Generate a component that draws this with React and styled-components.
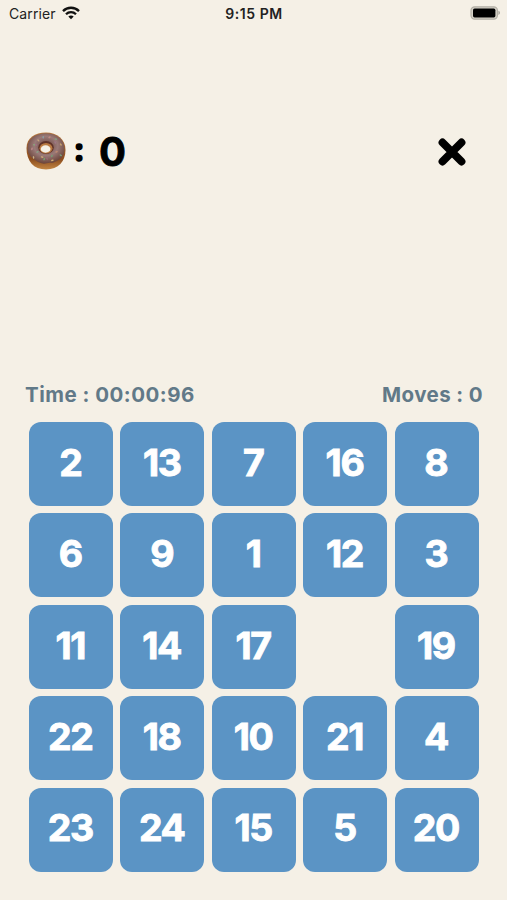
import React, { useState } from 'react'
import styled, { createGlobalStyle } from 'styled-components'

const colors = {
  cream: '#f5f0e6',
  blue: '#5b94c5',
  slate: '#617988',
  black: '#000'
}

const GlobalStyle = createGlobalStyle`
  * {
    box-sizing: border-box;
  }

  body {
    margin: 0;
    background: ${colors.cream};
    font-family: Inter, 'Liberation Sans', sans-serif;
  }
`

const Screen = styled.div`
  width: 507px;
  height: 900px;
  display: flex;
  flex-direction: column;
  overflow: hidden;
  background: ${colors.cream};
`

const StatusBar = styled.div`
  height: 26px;
  padding: 0 6px 0 9px;
  display: grid;
  grid-template-columns: 1fr auto 1fr;
  align-items: center;
  color: #222;
  font-size: 14px;
`

const Carrier = styled.div`
  display: flex;
  align-items: center;
  gap: 6px;
  letter-spacing: 0.1px;
`

const Clock = styled.div`
  padding-right: 2px;
  font-weight: 600;
  font-size: 14px;
  letter-spacing: 0.55px;
`

const BatteryIcon = styled.svg`
  justify-self: end;
`

const Header = styled.header`
  height: 60px;
  margin-top: 96px;
  padding: 0 41px 0 26px;
  display: flex;
  align-items: center;
  justify-content: space-between;
`

const Score = styled.div`
  display: flex;
  align-items: center;
  color: ${colors.black};
  font-size: 40px;
  line-height: 60px;
  font-weight: 700;
  -webkit-text-stroke: 0.8px #000;
`

const DonutIcon = styled.svg`
  margin-bottom: 3px;
`

const Colon = styled.span`
  width: 14px;
  margin: 0 13px 0 6px;
  padding-bottom: 5px;
  text-align: center;
  font-size: 32px;
  -webkit-text-stroke: 1.6px #000;
`

const CloseButton = styled.button`
  width: 28px;
  height: 28px;
  padding: 0;
  border: 0;
  background: none;
  display: flex;
`

const Stats = styled.div`
  height: 30px;
  margin-top: 197px;
  padding: 0 24px 0 25px;
  display: flex;
  align-items: center;
  justify-content: space-between;
  color: ${colors.slate};
  font-size: 20.5px;
  font-weight: 700;
`

const Stat = styled.span`
  white-space: pre;
  letter-spacing: ${props => props.$spacing}px;
`

const Board = styled.main`
  margin: 13px 28px 0 29px;
  display: grid;
  grid-template-columns: repeat(5, 84px);
  grid-auto-rows: 84px;
  gap: 7.4px;
`

const Tile = styled.button`
  padding: 0 0 3px;
  border: 0;
  border-radius: 12px;
  background: ${colors.blue};
  color: #fff;
  font: 700 37.5px/1 Inter, 'Liberation Sans', sans-serif;
  letter-spacing: ${props => props.$spacing}px;
  text-indent: ${props => props.$spacing}px;
  -webkit-text-stroke: 0.9px #fff;
`

const START = [
  2, 13, 7, 16, 8,
  6, 9, 1, 12, 3,
  11, 14, 17, 0, 19,
  22, 18, 10, 21, 4,
  23, 24, 15, 5, 20
]

function Wifi() {
  return (
    <svg width="18" height="14" viewBox="0 0 18 14" fill="none" stroke="#111" strokeWidth="2.3">
      <path d="M1 5.1C5.4 .6 12.6 .6 17 5.1" />
      <path d="M4 8.2c2.8-2.8 7.2-2.8 10 0" />
      <path d="M9 13.3 6.3 10.6c1.5-1.4 3.9-1.4 5.4 0z" fill="#111" stroke="none" />
    </svg>
  )
}

function Battery() {
  return (
    <BatteryIcon width="31" height="14" viewBox="0 0 31 14">
      <rect x="1" y=".8" width="26.4" height="12.4" rx="3.6" fill="#d6d2c8" stroke="#b3afa6" strokeWidth="1.2" />
      <rect x="3" y="2.6" width="22.4" height="8.8" rx="1.6" fill="#000" />
      <path d="M28.4 4.8c2.1.7 2.1 3.5 0 4.2z" fill="#aaa69e" />
    </BatteryIcon>
  )
}

const sprinkles = [
  [7, 12, '#8aa57a'], [12, 7, '#c6a47e'], [18, 4, '#8a9fa5'], [25, 5, '#c08b82'],
  [31, 8, '#83a080'], [35, 14, '#c5a26d'], [5, 18, '#c18a8d'], [10, 20, '#84a586'],
  [15, 24, '#d1b078'], [21, 25, '#9b6b76'], [27, 23, '#739f73'], [32, 20, '#c28b70'],
  [11, 14, '#a06f83'], [29, 12, '#a07688'], [17, 28, '#76a16f'], [25, 28, '#d4b077'],
  [34, 22, '#7c9f78'], [8, 24, '#ccb184']
]

function Donut() {
  return (
    <DonutIcon width="40" height="38" viewBox="0 0 40 38">
      <defs>
        <linearGradient id="dough" x1="0" x2="0" y1="0" y2="1">
          <stop offset="0" stopColor="#b9783b" />
          <stop offset=".72" stopColor="#8c4d1e" />
          <stop offset="1" stopColor="#c38643" />
        </linearGradient>
        <radialGradient id="icing" cx=".5" cy=".42" r=".58">
          <stop offset="0" stopColor="#67413a" />
          <stop offset=".55" stopColor="#9a7a78" />
          <stop offset="1" stopColor="#6b4439" />
        </radialGradient>
      </defs>
      <path d="M.5 16C.5 6 9 .5 20 .5S39.5 7 39.5 18c0 11-7 19.5-19.5 19.5S.5 29 .5 16z" fill="url(#dough)" />
      <path d="M1.5 15C2 6 10 1.3 20 1.3S38 7 38.5 16c.3 7-3 10.5-6 12-3 1.3-4 3.3-8 2.8-3-.4-5 1.6-9 .5-3-1-5-2-7.5-4C4 24.7 1 21 1.5 15z" fill="url(#icing)" />
      {sprinkles.map(([x, y, fill], i) => (
        <rect key={i} x={x} y={y} width="2.6" height="1.4" rx=".7" fill={fill} transform={`rotate(${i * 47} ${x} ${y})`} />
      ))}
      <ellipse cx="20" cy="15.5" rx="7.8" ry="6.4" fill="#603228" />
      <ellipse cx="20" cy="16.2" rx="6.5" ry="5.2" fill="#b97a42" />
      <ellipse cx="19.6" cy="17" rx="4.9" ry="3.7" fill={colors.cream} />
    </DonutIcon>
  )
}

function Cross() {
  return (
    <svg width="28" height="28" viewBox="0 0 28 28" stroke="#000" strokeWidth="7.8" strokeLinecap="round">
      <path d="M4.5 4.5 23.5 23.5M23.5 4.5 4.5 23.5" />
    </svg>
  )
}

export default function App() {
  const [tiles, setTiles] = useState(START)
  const [moves, setMoves] = useState(0)

  function handleMove(index) {
    const empty = tiles.indexOf(0)
    const dx = Math.abs((index % 5) - (empty % 5))
    const dy = Math.abs(Math.floor(index / 5) - Math.floor(empty / 5))
    if (dx + dy !== 1) return
    const next = [...tiles]
    next[empty] = tiles[index]
    next[index] = 0
    setTiles(next)
    setMoves(moves + 1)
  }

  return (
    <Screen>
      <GlobalStyle />
      <StatusBar>
        <Carrier>Carrier <Wifi /></Carrier>
        <Clock>9:15 PM</Clock>
        <Battery />
      </StatusBar>
      <Header>
        <Score>
          <Donut />
          <Colon>:</Colon>
          <span>0</span>
        </Score>
        <CloseButton aria-label="Close"><Cross /></CloseButton>
      </Header>
      <Stats>
        <Stat $spacing={0.5}>Time : 00:00:96</Stat>
        <Stat $spacing={0.4}>Moves : {moves}</Stat>
      </Stats>
      <Board>
        {tiles.map((value, i) => value
          ? <Tile key={value} $spacing={value < 10 ? 0 : -1.4} onClick={() => handleMove(i)}>{value}</Tile>
          : <span key="empty" />
        )}
      </Board>
    </Screen>
  )
}
